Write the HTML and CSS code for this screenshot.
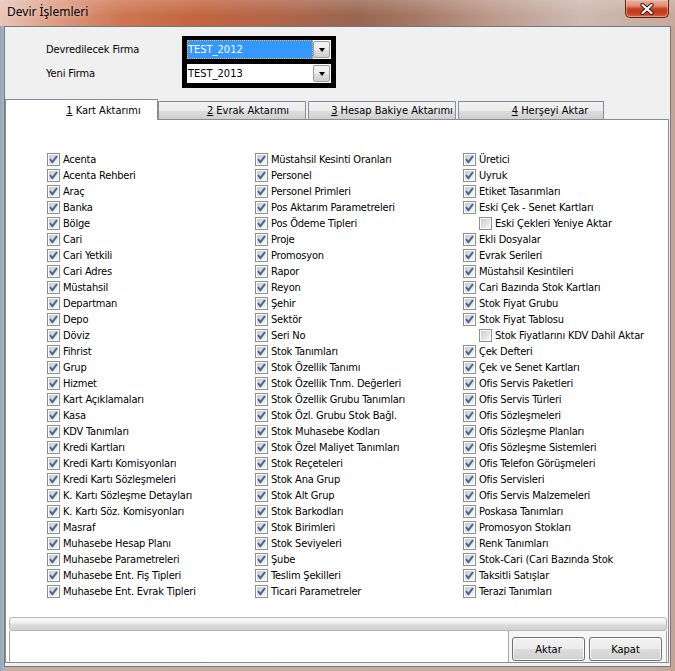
FILE: index.html
```html
<!DOCTYPE html>
<html lang="tr">
<head>
<meta charset="utf-8">
<title>Devir İşlemleri</title>
<link rel="stylesheet" href="styles.css">
</head>
<body>
<svg class="defs" width="0" height="0" aria-hidden="true">
  <defs>
    <linearGradient id="cbg" x1="0" y1="0" x2="1" y2="1">
      <stop offset="0" stop-color="#cbcbcb"/>
      <stop offset="1" stop-color="#f6f6f6"/>
    </linearGradient>
    <symbol id="chk" viewBox="0 0 13 13">
      <rect x="0.5" y="0.5" width="12" height="12" fill="#fdfdfd" stroke="#8e8f8f"/>
      <rect x="2" y="2" width="9" height="9" fill="url(#cbg)"/>
      <path d="M3 6.2 L5.4 9.2 L10 3" fill="none" stroke="#41629f" stroke-width="2"/>
    </symbol>
    <symbol id="unchk" viewBox="0 0 13 13">
      <rect x="0.5" y="0.5" width="12" height="12" fill="#fdfdfd" stroke="#8e8f8f"/>
      <rect x="2" y="2" width="9" height="9" fill="url(#cbg)"/>
    </symbol>
  </defs>
</svg>
<div class="window">
  <div class="titlebar">
    <span class="title">Devir İşlemleri</span>
    <div class="close">
      <svg width="16" height="12" viewBox="0 0 16 12">
        <path d="M3.5 2 L12.5 10 M12.5 2 L3.5 10" stroke="#3a1a14" stroke-width="4.2" stroke-linecap="round"/>
        <path d="M3.5 2 L12.5 10 M12.5 2 L3.5 10" stroke="#ffffff" stroke-width="2.2" stroke-linecap="round"/>
      </svg>
    </div>
  </div>
  <div class="frame">
    <div class="client">
      <div class="top">
        <div class="labels">
          <div>Devredilecek Firma</div>
          <div>Yeni Firma</div>
        </div>
        <div class="combos">
          <div class="combo sel"><span class="val">TEST_2012</span><span class="drop"></span></div>
          <div class="combo"><span class="val">TEST_2013</span><span class="drop"></span></div>
        </div>
      </div>
      <div class="tabs">
        <div class="tab active t1"><u>1</u>&nbsp;Kart Aktarımı</div>
        <div class="tab t2"><u>2</u>&nbsp;Evrak Aktarımı</div>
        <div class="tab t3"><u>3</u>&nbsp;Hesap Bakiye Aktarımı</div>
        <div class="tab t4"><u>4</u>&nbsp;Herşeyi Aktar</div>
      </div>
      <div class="page">
        <div class="grid">
          <div class="col">
            <div class="row"><svg class="cb"><use href="#chk"/></svg>Acenta</div>
            <div class="row"><svg class="cb"><use href="#chk"/></svg>Acenta Rehberi</div>
            <div class="row"><svg class="cb"><use href="#chk"/></svg>Araç</div>
            <div class="row"><svg class="cb"><use href="#chk"/></svg>Banka</div>
            <div class="row"><svg class="cb"><use href="#chk"/></svg>Bölge</div>
            <div class="row"><svg class="cb"><use href="#chk"/></svg>Cari</div>
            <div class="row"><svg class="cb"><use href="#chk"/></svg>Cari Yetkili</div>
            <div class="row"><svg class="cb"><use href="#chk"/></svg>Cari Adres</div>
            <div class="row"><svg class="cb"><use href="#chk"/></svg>Müstahsil</div>
            <div class="row"><svg class="cb"><use href="#chk"/></svg>Departman</div>
            <div class="row"><svg class="cb"><use href="#chk"/></svg>Depo</div>
            <div class="row"><svg class="cb"><use href="#chk"/></svg>Döviz</div>
            <div class="row"><svg class="cb"><use href="#chk"/></svg>Fihrist</div>
            <div class="row"><svg class="cb"><use href="#chk"/></svg>Grup</div>
            <div class="row"><svg class="cb"><use href="#chk"/></svg>Hizmet</div>
            <div class="row"><svg class="cb"><use href="#chk"/></svg>Kart Açıklamaları</div>
            <div class="row"><svg class="cb"><use href="#chk"/></svg>Kasa</div>
            <div class="row"><svg class="cb"><use href="#chk"/></svg>KDV Tanımları</div>
            <div class="row"><svg class="cb"><use href="#chk"/></svg>Kredi Kartları</div>
            <div class="row"><svg class="cb"><use href="#chk"/></svg>Kredi Kartı Komisyonları</div>
            <div class="row"><svg class="cb"><use href="#chk"/></svg>Kredi Kartı Sözleşmeleri</div>
            <div class="row"><svg class="cb"><use href="#chk"/></svg>K. Kartı Sözleşme Detayları</div>
            <div class="row"><svg class="cb"><use href="#chk"/></svg>K. Kartı Söz. Komisyonları</div>
            <div class="row"><svg class="cb"><use href="#chk"/></svg>Masraf</div>
            <div class="row"><svg class="cb"><use href="#chk"/></svg>Muhasebe Hesap Planı</div>
            <div class="row"><svg class="cb"><use href="#chk"/></svg>Muhasebe Parametreleri</div>
            <div class="row"><svg class="cb"><use href="#chk"/></svg>Muhasebe Ent. Fiş Tipleri</div>
            <div class="row"><svg class="cb"><use href="#chk"/></svg>Muhasebe Ent. Evrak Tipleri</div>
          </div>
          <div class="col">
            <div class="row"><svg class="cb"><use href="#chk"/></svg>Müstahsil Kesinti Oranları</div>
            <div class="row"><svg class="cb"><use href="#chk"/></svg>Personel</div>
            <div class="row"><svg class="cb"><use href="#chk"/></svg>Personel Primleri</div>
            <div class="row"><svg class="cb"><use href="#chk"/></svg>Pos Aktarım Parametreleri</div>
            <div class="row"><svg class="cb"><use href="#chk"/></svg>Pos Ödeme Tipleri</div>
            <div class="row"><svg class="cb"><use href="#chk"/></svg>Proje</div>
            <div class="row"><svg class="cb"><use href="#chk"/></svg>Promosyon</div>
            <div class="row"><svg class="cb"><use href="#chk"/></svg>Rapor</div>
            <div class="row"><svg class="cb"><use href="#chk"/></svg>Reyon</div>
            <div class="row"><svg class="cb"><use href="#chk"/></svg>Şehir</div>
            <div class="row"><svg class="cb"><use href="#chk"/></svg>Sektör</div>
            <div class="row"><svg class="cb"><use href="#chk"/></svg>Seri No</div>
            <div class="row"><svg class="cb"><use href="#chk"/></svg>Stok Tanımları</div>
            <div class="row"><svg class="cb"><use href="#chk"/></svg>Stok Özellik Tanımı</div>
            <div class="row"><svg class="cb"><use href="#chk"/></svg>Stok Özellik Tnm. Değerleri</div>
            <div class="row"><svg class="cb"><use href="#chk"/></svg>Stok Özellik Grubu Tanımları</div>
            <div class="row"><svg class="cb"><use href="#chk"/></svg>Stok Özl. Grubu Stok Bağl.</div>
            <div class="row"><svg class="cb"><use href="#chk"/></svg>Stok Muhasebe Kodları</div>
            <div class="row"><svg class="cb"><use href="#chk"/></svg>Stok Özel Maliyet Tanımları</div>
            <div class="row"><svg class="cb"><use href="#chk"/></svg>Stok Reçeteleri</div>
            <div class="row"><svg class="cb"><use href="#chk"/></svg>Stok Ana Grup</div>
            <div class="row"><svg class="cb"><use href="#chk"/></svg>Stok Alt Grup</div>
            <div class="row"><svg class="cb"><use href="#chk"/></svg>Stok Barkodları</div>
            <div class="row"><svg class="cb"><use href="#chk"/></svg>Stok Birimleri</div>
            <div class="row"><svg class="cb"><use href="#chk"/></svg>Stok Seviyeleri</div>
            <div class="row"><svg class="cb"><use href="#chk"/></svg>Şube</div>
            <div class="row"><svg class="cb"><use href="#chk"/></svg>Teslim Şekilleri</div>
            <div class="row"><svg class="cb"><use href="#chk"/></svg>Ticari Parametreler</div>
          </div>
          <div class="col">
            <div class="row"><svg class="cb"><use href="#chk"/></svg>Üretici</div>
            <div class="row"><svg class="cb"><use href="#chk"/></svg>Uyruk</div>
            <div class="row"><svg class="cb"><use href="#chk"/></svg>Etiket Tasarımları</div>
            <div class="row"><svg class="cb"><use href="#chk"/></svg>Eski Çek - Senet Kartları</div>
            <div class="row sub"><svg class="cb"><use href="#unchk"/></svg>Eski Çekleri Yeniye Aktar</div>
            <div class="row"><svg class="cb"><use href="#chk"/></svg>Ekli Dosyalar</div>
            <div class="row"><svg class="cb"><use href="#chk"/></svg>Evrak Serileri</div>
            <div class="row"><svg class="cb"><use href="#chk"/></svg>Müstahsil Kesintileri</div>
            <div class="row"><svg class="cb"><use href="#chk"/></svg>Cari Bazında Stok Kartları</div>
            <div class="row"><svg class="cb"><use href="#chk"/></svg>Stok Fiyat Grubu</div>
            <div class="row"><svg class="cb"><use href="#chk"/></svg>Stok Fiyat Tablosu</div>
            <div class="row sub"><svg class="cb"><use href="#unchk"/></svg>Stok Fiyatlarını KDV Dahil Aktar</div>
            <div class="row"><svg class="cb"><use href="#chk"/></svg>Çek Defteri</div>
            <div class="row"><svg class="cb"><use href="#chk"/></svg>Çek ve Senet Kartları</div>
            <div class="row"><svg class="cb"><use href="#chk"/></svg>Ofis Servis Paketleri</div>
            <div class="row"><svg class="cb"><use href="#chk"/></svg>Ofis Servis Türleri</div>
            <div class="row"><svg class="cb"><use href="#chk"/></svg>Ofis Sözleşmeleri</div>
            <div class="row"><svg class="cb"><use href="#chk"/></svg>Ofis Sözleşme Planları</div>
            <div class="row"><svg class="cb"><use href="#chk"/></svg>Ofis Sözleşme Sistemleri</div>
            <div class="row"><svg class="cb"><use href="#chk"/></svg>Ofis Telefon Görüşmeleri</div>
            <div class="row"><svg class="cb"><use href="#chk"/></svg>Ofis Servisleri</div>
            <div class="row"><svg class="cb"><use href="#chk"/></svg>Ofis Servis Malzemeleri</div>
            <div class="row"><svg class="cb"><use href="#chk"/></svg>Poskasa Tanımları</div>
            <div class="row"><svg class="cb"><use href="#chk"/></svg>Promosyon Stokları</div>
            <div class="row"><svg class="cb"><use href="#chk"/></svg>Renk Tanımları</div>
            <div class="row"><svg class="cb"><use href="#chk"/></svg>Stok-Cari (Cari Bazında Stok</div>
            <div class="row"><svg class="cb"><use href="#chk"/></svg>Taksitli Satışlar</div>
            <div class="row"><svg class="cb"><use href="#chk"/></svg>Terazi Tanımları</div>
          </div>
        </div>
        <div class="pbar"></div>
        <div class="footer">
          <div class="btnbox">
            <button class="btn">Aktar</button>
            <button class="btn">Kapat</button>
          </div>
        </div>
      </div>
    </div>
  </div>
</div>
</body>
</html>
```
FILE: styles.css
```css
html, body {
  margin: 0;
  padding: 0;
}
body {
  font-family: "DejaVu Sans Condensed", "DejaVu Sans", sans-serif;
  font-stretch: condensed;
  font-size: 11px;
  color: #000;
  background: #ffffff;
}
.defs {
  position: absolute;
  width: 0;
  height: 0;
  overflow: hidden;
}
.window {
  width: 675px;
  height: 671px;
  display: flex;
  flex-direction: column;
  overflow: hidden;
  background: linear-gradient(90deg, #93a7b2 0, #a8b6be 4px, #c9ab9b 8px, #c7ad9f 96%, #c2a595 100%);
}
.titlebar {
  height: 26px;
  flex: none;
  display: flex;
  align-items: flex-start;
  background:
    linear-gradient(rgba(255,255,255,0.18), rgba(255,255,255,0) 60%),
    linear-gradient(90deg, #e8c6b8 0%, #dea18a 7%, #cd7652 18%, #c2643f 30%, #b0654a 42%, #98664f 53%, #a67966 62%, #bc9a8b 73%, #cdbab1 86%, #c6a99b 100%);
}
.title {
  margin: 4px 0 0 7px;
  font-family: "Noto Sans", "DejaVu Sans", sans-serif;
  font-size: 12px;
  line-height: 16px;
  color: #000;
  text-shadow: 0 0 6px rgba(255,240,230,0.7);
}
.close {
  margin: 0 6px 0 auto;
  width: 44px;
  height: 18px;
  box-sizing: border-box;
  border: 1px solid #5e2117;
  border-top: none;
  border-radius: 0 0 5px 5px;
  background: linear-gradient(#eab2a2 0, #de8c74 35%, #c8401f 52%, #c33a1c 75%, #d8674a 100%);
  box-shadow: inset 0 0 0 1px rgba(255, 210, 200, 0.45);
  display: flex;
  align-items: center;
  justify-content: center;
}
.frame {
  flex: 1;
  display: flex;
  padding: 0 4px 4px 4px;
}
.client {
  flex: 1;
  display: flex;
  flex-direction: column;
  background: #f0f0f0;
  border: 1px solid #6d7a84;
}
.top {
  height: 72px;
  flex: none;
  box-sizing: border-box;
  display: flex;
  padding: 9px 0 0 41px;
}
.labels {
  width: 136px;
  padding-top: 4px;
  display: flex;
  flex-direction: column;
  gap: 5px;
}
.labels div {
  height: 19px;
  line-height: 19px;
  letter-spacing: -0.1px;
}
.combos {
  width: 154px;
  height: 52px;
  box-sizing: border-box;
  background: #000;
  padding: 4px 5px 5px 5px;
  display: flex;
  flex-direction: column;
  gap: 5px;
}
.combo {
  height: 19px;
  display: flex;
  background: #fff;
}
.combo .val {
  flex: 1;
  line-height: 19px;
  padding-left: 1px;
}
.combo.sel .val {
  background: #3399ff;
  color: #fff;
  outline: 1px dotted #f0b070;
  outline-offset: -1px;
}
.drop {
  width: 17px;
  margin: 1px 1px 1px 0;
  box-sizing: border-box;
  border: 1px solid #9a9a9a;
  border-radius: 2px;
  background: linear-gradient(#f4f4f4 0, #ececec 50%, #dedede 51%, #d0d0d0 100%);
  display: flex;
  align-items: center;
  justify-content: center;
}
.drop::after {
  content: "";
  width: 0;
  height: 0;
  border-left: 3.5px solid transparent;
  border-right: 3.5px solid transparent;
  border-top: 4px solid #000;
}
.tabs {
  height: 20px;
  flex: none;
  display: flex;
  align-items: flex-end;
  position: relative;
  z-index: 1;
}
.tab {
  box-sizing: border-box;
  height: 18px;
  border: 1px solid #898c95;
  border-bottom: none;
  background: linear-gradient(#f3f3f3 0, #ebebeb 50%, #dddddd 51%, #cfcfcf 100%);
  display: flex;
  align-items: center;
  justify-content: center;
  white-space: nowrap;
}
.tab u {
  text-decoration: underline;
}
.tab.active {
  height: 21px;
  margin-bottom: -1px;
  background: #fff;
}
.t1 { width: 153px; padding-left: 44px; }
.t2 { width: 148px; padding-left: 32px; }
.t3 { width: 148px; margin-left: 2px; padding-left: 20px; }
.t4 { width: 146px; margin-left: 2px; padding-left: 38px; }
.page {
  flex: 1;
  display: flex;
  flex-direction: column;
  background: #fff;
  border: 1px solid #898c95;
  margin: 0 1px 3px 0;
}
.grid {
  display: grid;
  grid-template-columns: 208px 208px 1fr;
  padding: 31px 0 0 41px;
  letter-spacing: -0.2px;
}
.row {
  height: 16px;
  display: flex;
  align-items: center;
  white-space: nowrap;
}
.row.sub {
  padding-left: 16px;
}
.cb {
  width: 13px;
  height: 13px;
  flex: none;
  margin-right: 3px;
}
.pbar {
  margin: 18px 1px 0 3px;
  height: 14px;
  box-sizing: border-box;
  border: 1px solid #b6b6b6;
  border-radius: 3px;
  background: linear-gradient(#fbfbfb 0, #efefef 40%, #dadada 60%, #d2d2d2 100%);
}
.footer {
  flex: 1;
  margin: 0 1px 0 3px;
  border-left: 1px solid #a6a6a6;
  border-right: 1px solid #a6a6a6;
  display: flex;
}
.btnbox {
  margin-left: auto;
  width: 158px;
  box-sizing: border-box;
  border-left: 1px solid #a6a6a6;
  background: #f7f7f7;
  display: flex;
  gap: 4px;
  padding: 6px 0 0 3px;
}
.btn {
  width: 73px;
  height: 24px;
  box-sizing: border-box;
  border: 1px solid #707070;
  border-radius: 3px;
  background: linear-gradient(#f2f2f2 0, #ebebeb 50%, #dddddd 51%, #cfcfcf 100%);
  box-shadow: inset 0 0 0 1px #fbfbfb;
  font-family: inherit;
  font-stretch: condensed;
  font-size: 11px;
  color: #000;
  padding: 0;
}
```
